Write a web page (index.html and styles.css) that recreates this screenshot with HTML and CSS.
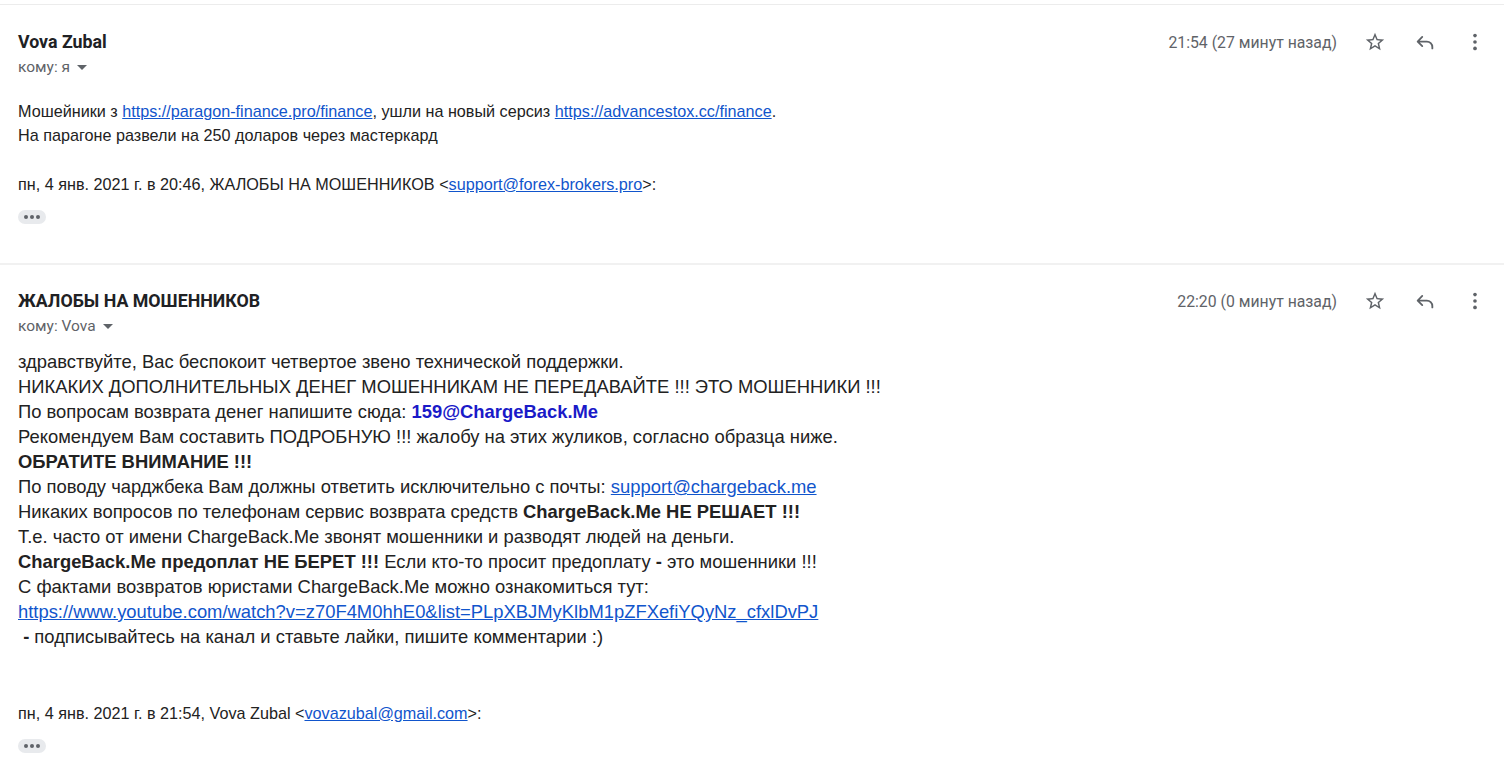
FILE: index.html
```html
<!DOCTYPE html>
<html lang="ru">
<head>
<meta charset="utf-8">
<title>Письмо</title>
<link rel="stylesheet" href="styles.css">
</head>
<body>
<div class="thread">
  <div class="msg msg1">
    <div class="head">
      <div class="who">
        <div class="name">Vova Zubal</div>
        <div class="to">кому: я <span class="caret"></span></div>
      </div>
      <div class="meta">
        <span class="time">21:54 (27 минут назад)</span>
        <span class="icon star"><svg viewBox="0 0 24 24" width="22" height="22"><path d="M22 9.24l-7.19-.62L12 2 9.19 8.63 2 9.24l5.46 4.73L5.82 21 12 17.27 18.18 21l-1.63-7.03L22 9.24zM12 15.4l-3.76 2.27 1-4.28-3.32-2.88 4.38-.38L12 6.1l1.71 4.04 4.38.38-3.32 2.88 1 4.28L12 15.4z"/></svg></span>
        <span class="icon reply"><svg viewBox="0 0 24 24" width="22" height="22"><path d="M9 6.5L4 11.5l5 5M4.5 11.5H14a6 6 0 0 1 6 6v1.5"/></svg></span>
        <span class="icon more"><svg viewBox="0 0 24 24" width="22" height="22"><circle cx="12" cy="5" r="2"/><circle cx="12" cy="12" r="2"/><circle cx="12" cy="19" r="2"/></svg></span>
      </div>
    </div>
    <div class="body body1">
      <div>Мошейники з <a href="#">https://paragon-finance.pro/finance</a>, ушли на новый серсиз <a href="#">https://advancestox.cc/finance</a>.</div>
      <div>На парагоне развели на 250 доларов через мастеркард</div>
      <div class="quote-head">пн, 4 янв. 2021 г. в 20:46, ЖАЛОБЫ НА МОШЕННИКОВ &lt;<a href="#">support@forex-brokers.pro</a>&gt;:</div>
      <div class="dots"><span></span><span></span><span></span></div>
    </div>
  </div>

  <div class="msg msg2">
    <div class="head">
      <div class="who">
        <div class="name">ЖАЛОБЫ НА МОШЕННИКОВ</div>
        <div class="to">кому: Vova <span class="caret"></span></div>
      </div>
      <div class="meta">
        <span class="time">22:20 (0 минут назад)</span>
        <span class="icon star"><svg viewBox="0 0 24 24" width="22" height="22"><path d="M22 9.24l-7.19-.62L12 2 9.19 8.63 2 9.24l5.46 4.73L5.82 21 12 17.27 18.18 21l-1.63-7.03L22 9.24zM12 15.4l-3.76 2.27 1-4.28-3.32-2.88 4.38-.38L12 6.1l1.71 4.04 4.38.38-3.32 2.88 1 4.28L12 15.4z"/></svg></span>
        <span class="icon reply"><svg viewBox="0 0 24 24" width="22" height="22"><path d="M9 6.5L4 11.5l5 5M4.5 11.5H14a6 6 0 0 1 6 6v1.5"/></svg></span>
        <span class="icon more"><svg viewBox="0 0 24 24" width="22" height="22"><circle cx="12" cy="5" r="2"/><circle cx="12" cy="12" r="2"/><circle cx="12" cy="19" r="2"/></svg></span>
      </div>
    </div>
    <div class="body body2">
      <div class="big">
        <div>здравствуйте, Вас беспокоит четвертое звено технической поддержки.</div>
        <div>НИКАКИХ ДОПОЛНИТЕЛЬНЫХ ДЕНЕГ МОШЕННИКАМ НЕ ПЕРЕДАВАЙТЕ !!! ЭТО МОШЕННИКИ !!!</div>
        <div>По вопросам возврата денег напишите сюда: <b class="blue">159@ChargeBack.Me</b></div>
        <div>Рекомендуем Вам составить ПОДРОБНУЮ !!! жалобу на этих жуликов, согласно образца ниже.</div>
        <div><b>ОБРАТИТЕ ВНИМАНИЕ !!!</b></div>
        <div>По поводу чарджбека Вам должны ответить исключительно с почты: <a href="#">support@chargeback.me</a></div>
        <div>Никаких вопросов по телефонам сервис возврата средств <b>ChargeBack.Me НЕ РЕШАЕТ !!!</b></div>
        <div>Т.е. часто от имени ChargeBack.Me звонят мошенники и разводят людей на деньги.</div>
        <div><b>ChargeBack.Me предоплат НЕ БЕРЕТ !!!</b> Если кто-то просит предоплату <b>-</b> это мошенники !!!</div>
        <div>С фактами возвратов юристами ChargeBack.Me можно ознакомиться тут:</div>
        <div><a href="#">https://www.youtube.com/watch?v=z70F4M0hhE0&amp;list=PLpXBJMyKlbM1pZFXefiYQyNz_cfxlDvPJ</a></div>
        <div>&nbsp;<b>-</b> подписывайтесь на канал и ставьте лайки, пишите комментарии :)</div>
      </div>
      <div class="quote-head qh2">пн, 4 янв. 2021 г. в 21:54, Vova Zubal &lt;<a href="#">vovazubal@gmail.com</a>&gt;:</div>
      <div class="dots"><span></span><span></span><span></span></div>
    </div>
  </div>
</div>
</body>
</html>
```
FILE: styles.css
```css
html, body {
  margin: 0;
  padding: 0;
  background: #fff;
}
body {
  padding-top: 4px;
  font-family: "Liberation Sans", Arial, sans-serif;
  color: #222;
}
.thread {
  border-top: 1px solid #ececec;
}
.msg {
  padding: 27px 18px 0 18px;
}
.msg1 {
  height: 231px;
  border-bottom: 2px solid #f1f1f1;
}
.msg2 {
  padding-top: 26px;
}
.head {
  display: flex;
  justify-content: space-between;
  align-items: flex-start;
}
.name {
  font-family: Roboto, "Liberation Sans", sans-serif;
  font-weight: 700;
  font-size: 17.8px;
  line-height: 20px;
  color: #202124;
}
.to {
  font-family: Roboto, "Liberation Sans", sans-serif;
  font-size: 15.5px;
  line-height: 20px;
  color: #5f6368;
  margin-top: 5px;
  display: flex;
  align-items: center;
}
.caret {
  display: inline-block;
  width: 0;
  height: 0;
  margin-left: 7px;
  border-left: 5px solid transparent;
  border-right: 5px solid transparent;
  border-top: 5px solid #5f6368;
}
.meta {
  display: flex;
  align-items: center;
  height: 20px;
}
.time {
  font-family: Roboto, "Liberation Sans", sans-serif;
  font-size: 15.8px;
  color: #5f6368;
  margin-right: 27px;
}
.icon {
  width: 22px;
  height: 22px;
  display: flex;
  align-items: center;
  justify-content: center;
  margin-left: 28px;
}
.time + .icon { margin-left: 0; }
.icon svg { display: block; }
.star svg path { fill: #5f6368; }
.reply svg path {
  fill: none;
  stroke: #5f6368;
  stroke-width: 2;
  stroke-linecap: round;
  stroke-linejoin: round;
}
.more svg circle { fill: #5f6368; }
.body {
  font-size: 16.2px;
}
.body1 {
  margin-top: 22px;
  line-height: 24px;
}
.body2 {
  margin-top: 13px;
  line-height: 25px;
}
.big {
  font-size: 18.4px;
}
.body a {
  color: #1155cc;
  text-decoration: underline;
}
.blue {
  color: #1a1ac8;
}
.quote-head {
  margin-top: 25px;
  line-height: 24px;
  color: #222;
}
.qh2 {
  margin-top: 52px;
}
.dots {
  margin-top: 14px;
  width: 28px;
  height: 14px;
  border-radius: 7px;
  background: #e8eaed;
  display: flex;
  align-items: center;
  justify-content: center;
  gap: 2px;
}
.dots span {
  width: 4px;
  height: 4px;
  border-radius: 50%;
  background: #5f6368;
}
```
